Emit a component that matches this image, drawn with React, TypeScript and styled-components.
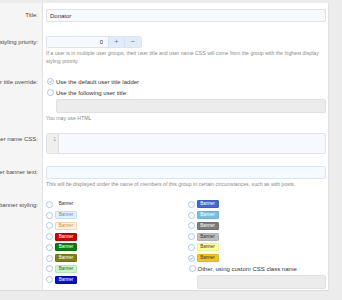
import React from "react";
import styled, { createGlobalStyle } from "styled-components";

const GlobalStyle = createGlobalStyle`
    body {
        margin: 0;
        background: #ececec;
        font-family: "Liberation Sans", Arial, sans-serif;
    }
`

const Page = styled.div`
    padding-top: 3px;
    height: 300px;
    box-sizing: border-box;
`

const Panel = styled.div`
    width: 329px;
    background: #fff;
    border-right: 1px solid #e2e2e2;
    border-bottom: 1px solid #dadada;
    box-sizing: border-box;
`

const Row = styled.dl`
    display: grid;
    grid-template-columns: 43px 1fr;
    margin: 0;
`

const Label = styled.dt<{ $pt: number }>`
    display: flex;
    justify-content: flex-end;
    align-items: flex-start;
    overflow: hidden;
    white-space: nowrap;
    box-sizing: border-box;
    padding: ${p => p.$pt}px 4px 0 0;
    background: #f5f5f5;
    border-right: 1px solid #e3e3e3;
    font-size: 6px;
    line-height: 12px;
    color: #4a4a4a;
`

const Field = styled.dd<{ $pt: number; $pb: number }>`
    margin: 0;
    min-width: 0;
    padding: ${p => p.$pt}px 2px ${p => p.$pb}px 3px;
`

const Input = styled.input<{ $h?: number; $indent?: number }>`
    display: block;
    box-sizing: border-box;
    width: calc(100% - ${p => p.$indent ?? 0}px);
    margin: 0 0 0 ${p => p.$indent ?? 0}px;
    height: ${p => p.$h ?? 13}px;
    padding: 0 3px;
    border: 1px solid #dce5ee;
    border-radius: 2px;
    background: #f6f9fd;
    font-family: inherit;
    font-size: 6px;
    color: #333;
    outline: none;

    &:disabled {
        background: #ececec;
        border-color: #e0e0e0;
    }
`

const NumberGroup = styled.div`
    display: flex;
    width: 96px;
    height: 12px;
    border: 1px solid #dce5ee;
    border-radius: 2px;
    box-sizing: border-box;
    overflow: hidden;
`

const NumberInput = styled.input`
    width: 61px;
    box-sizing: border-box;
    border: none;
    background: #f6f9fd;
    padding: 0 5px 0 0;
    text-align: right;
    font-family: inherit;
    font-size: 6px;
    color: #333;
    outline: none;
`

const SpinButton = styled.button<{ $w: number }>`
    width: ${p => p.$w}px;
    padding: 0;
    border: none;
    border-left: 1px solid #d3e1f0;
    background: #e2ecf8;
    color: #3b8ad4;
    font-family: inherit;
    font-size: 8px;
    line-height: 10px;
`

const Hint = styled.div`
    margin-top: 1px;
    font-size: 5.2px;
    line-height: 8px;
    color: #8c8c8c;
`

const Option = styled.label<{ $h?: number }>`
    display: flex;
    align-items: center;
    gap: 2px;
    height: ${p => p.$h ?? 11}px;
    padding-left: 1px;
    font-size: 6px;
    color: #333;
    white-space: nowrap;
`

const BannerGrid = styled.div`
    display: grid;
    grid-template-columns: 1fr 1fr;
    column-gap: 3px;
`

const BannerOption = styled.label`
    display: flex;
    align-items: center;
    gap: 2px;
    height: 10.75px;
`

const Banner = styled.span<{ $bg: string; $fg: string; $bd: string }>`
    display: inline-block;
    width: 22px;
    height: 8px;
    box-sizing: border-box;
    border: 1px solid ${p => p.$bd};
    border-radius: 1px;
    background: ${p => p.$bg};
    color: ${p => p.$fg};
    font-size: 4.5px;
    line-height: 6px;
    text-align: center;
`

const CodeBox = styled.div`
    display: flex;
    height: 21px;
    border: 1px solid #dce5ee;
    border-radius: 2px;
    background: #f6f9fd;
    box-sizing: border-box;
    overflow: hidden;
`

const Gutter = styled.div`
    width: 12px;
    box-sizing: border-box;
    padding: 2px 2px 0 0;
    background: #efefef;
    border-right: 1px solid #dddddd;
    text-align: right;
    font-size: 5px;
    line-height: 7px;
    color: #9a9a9a;
`

const Radio: React.FC<{ checked?: boolean }> = ({ checked }) => (
    <svg width="7" height="7" viewBox="0 0 14 14">
        <circle cx="7" cy="7" r="6" fill="#fff" stroke="#8fb1dc" strokeWidth="1.4" />
        {checked && <path d="M4.2 7.3l1.9 1.9 3.8-4.2" fill="none" stroke="#5a8fd1" strokeWidth="1.5" />}
    </svg>
)

interface BannerStyle {
    bg: string,
    fg: string,
    bd: string,
    checked?: boolean
}

const leftBanners: BannerStyle[] = [
    { bg: "transparent", fg: "#333", bd: "transparent" },
    { bg: "#e4f0fb", fg: "#5b8fc6", bd: "#c6dcf1" },
    { bg: "#fdf3e3", fg: "#d9893a", bd: "#f2d5ad" },
    { bg: "#d10000", fg: "#fff", bd: "#c00000" },
    { bg: "#0a800a", fg: "#fff", bd: "#087008" },
    { bg: "#808010", fg: "#fff", bd: "#74740c" },
    { bg: "#ccf5c8", fg: "#2a6a2a", bd: "#b5e6b0" },
    { bg: "#0a10d0", fg: "#fff", bd: "#0808b8" },
]

const rightBanners: BannerStyle[] = [
    { bg: "#3d6ad8", fg: "#fff", bd: "#3560c8" },
    { bg: "#78c0e0", fg: "#fff", bd: "#6ab2d2" },
    { bg: "#7c7c7c", fg: "#fff", bd: "#707070" },
    { bg: "#bcbcbc", fg: "#333", bd: "#b0b0b0" },
    { bg: "#ffff9c", fg: "#333", bd: "#efef88" },
    { bg: "#f6c31c", fg: "#333", bd: "#e8b410", checked: true },
]

export default function App() {
    return (
        <Page>
            <GlobalStyle />
            <Panel>
                <Row>
                    <Label $pt={6}>Title:</Label>
                    <Field $pt={6} $pb={7}>
                        <Input defaultValue="Donator" />
                    </Field>
                </Row>
                <Row>
                    <Label $pt={7}>Display styling priority:</Label>
                    <Field $pt={7} $pb={5}>
                        <NumberGroup>
                            <NumberInput defaultValue="0" />
                            <SpinButton $w={16}>+</SpinButton>
                            <SpinButton $w={18}>−</SpinButton>
                        </NumberGroup>
                        <Hint>If a user is in multiple user groups, their user title and user name CSS will come from the group with the highest display styling priority.</Hint>
                    </Field>
                </Row>
                <Row>
                    <Label $pt={6}>User title override:</Label>
                    <Field $pt={6} $pb={5}>
                        <Option><Radio checked />Use the default user title ladder</Option>
                        <Option><Radio />Use the following user title:</Option>
                        <Input $h={14} $indent={10} disabled style={{ marginTop: 1 }} />
                        <Hint>You may use HTML</Hint>
                    </Field>
                </Row>
                <Row>
                    <Label $pt={6}>User name CSS:</Label>
                    <Field $pt={6} $pb={6}>
                        <CodeBox>
                            <Gutter>1</Gutter>
                        </CodeBox>
                    </Field>
                </Row>
                <Row>
                    <Label $pt={6}>User banner text:</Label>
                    <Field $pt={6} $pb={5}>
                        <Input />
                        <Hint>This will be displayed under the name of members of this group in certain circumstances, such as with posts.</Hint>
                    </Field>
                </Row>
                <Row>
                    <Label $pt={6}>User banner styling:</Label>
                    <Field $pt={6} $pb={1}>
                        <BannerGrid>
                            <div>
                                {leftBanners.map((b, i) => (
                                    <BannerOption key={i}>
                                        <Radio checked={b.checked} />
                                        <Banner $bg={b.bg} $fg={b.fg} $bd={b.bd}>Banner</Banner>
                                    </BannerOption>
                                ))}
                            </div>
                            <div>
                                {rightBanners.map((b, i) => (
                                    <BannerOption key={i}>
                                        <Radio checked={b.checked} />
                                        <Banner $bg={b.bg} $fg={b.fg} $bd={b.bd}>Banner</Banner>
                                    </BannerOption>
                                ))}
                                <Option $h={10.75}><Radio />Other, using custom CSS class name</Option>
                                <Input $h={14} $indent={9} disabled style={{ marginTop: 1 }} />
                            </div>
                        </BannerGrid>
                    </Field>
                </Row>
            </Panel>
        </Page>
    )
}
